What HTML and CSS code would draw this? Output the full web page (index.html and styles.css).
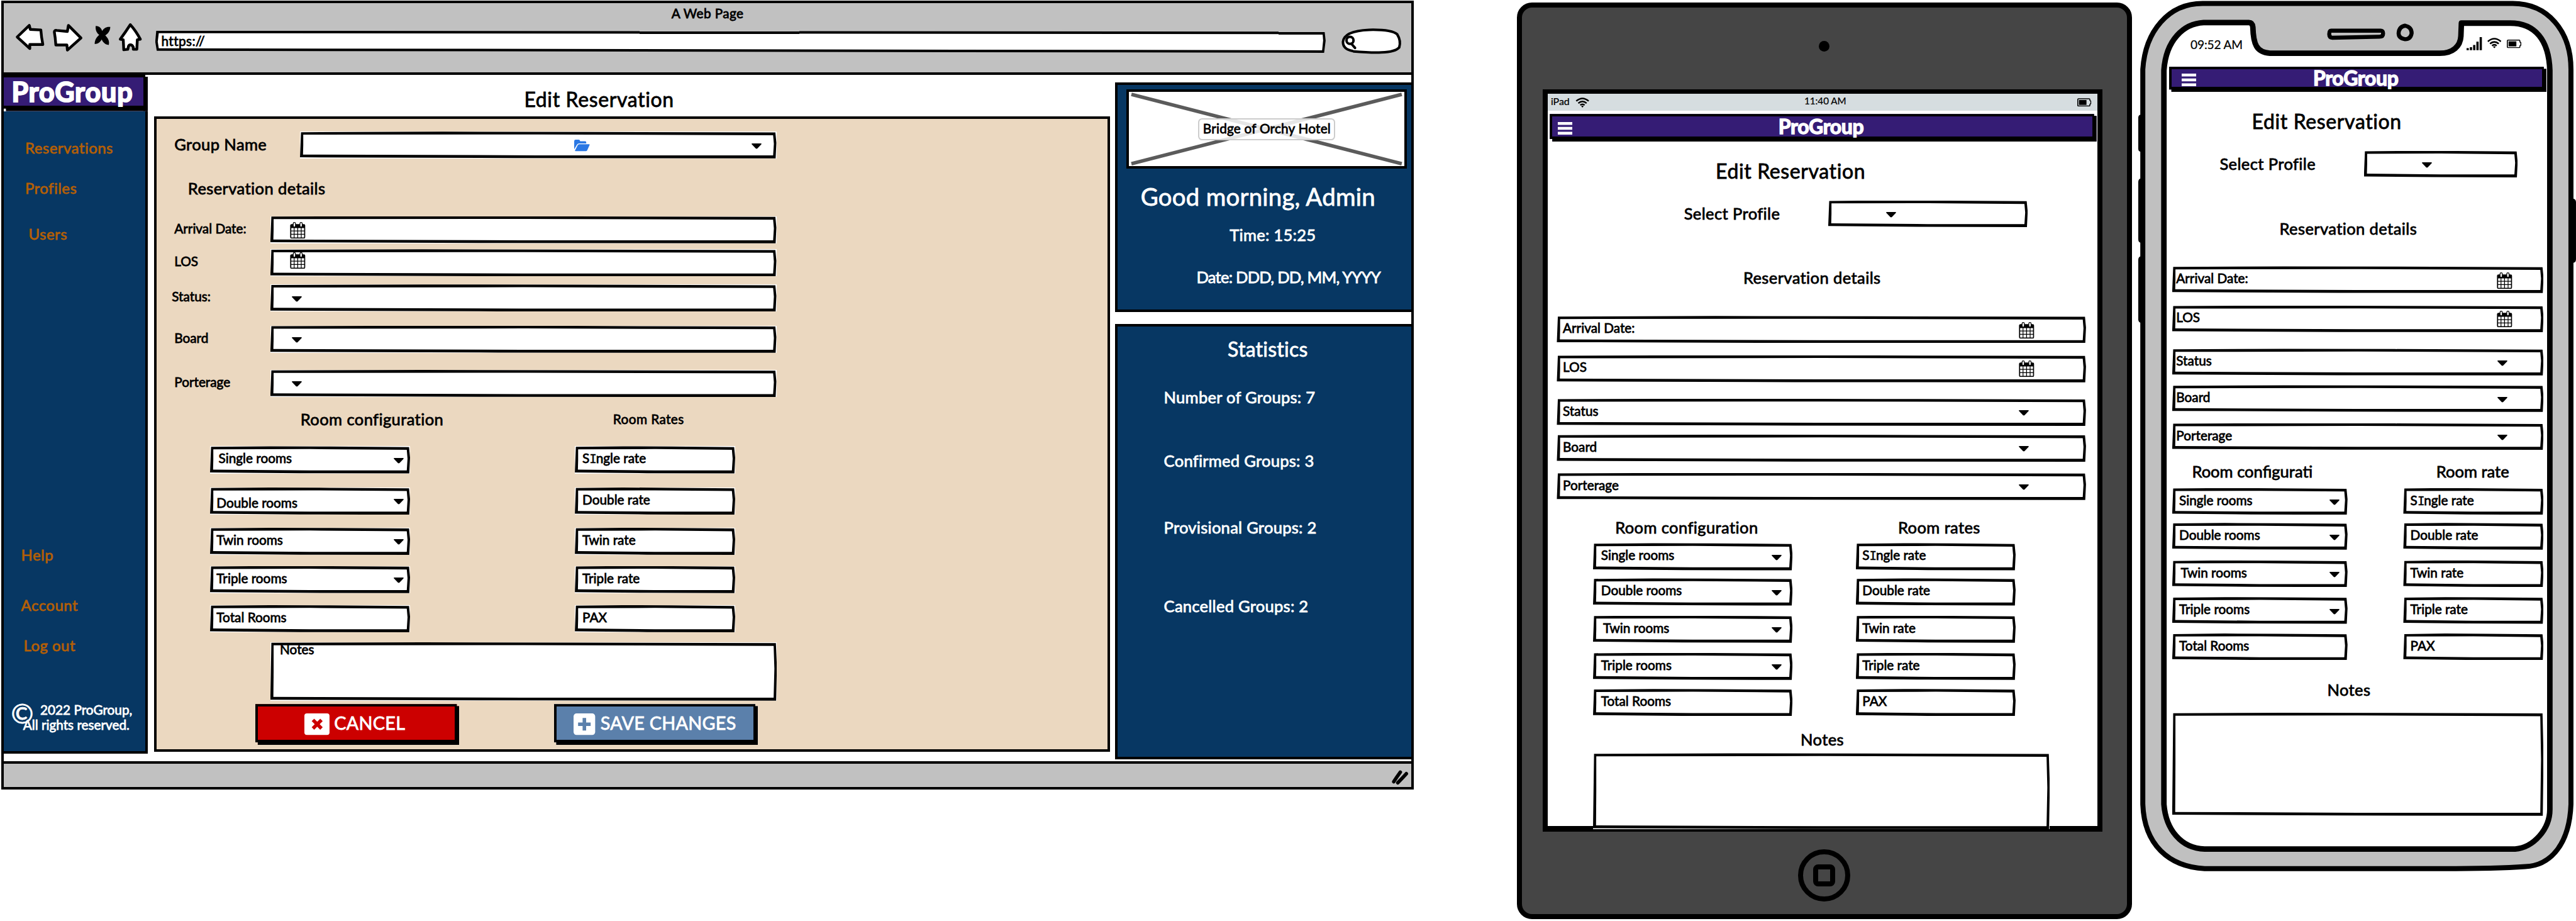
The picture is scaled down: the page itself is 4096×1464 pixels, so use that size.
FILE: index.html
```html
<!DOCTYPE html>
<html lang="en">
<head>
<meta charset="utf-8">
<title>ProGroup – Edit Reservation</title>
<link rel="stylesheet" href="styles.css">
</head>
<body>
<svg class="defs" aria-hidden="true">
  <symbol id="caret" viewBox="0 0 20 11"><path d="M1.2 0H18.8Q20.6.4 19.4 2L11.6 10Q10 11.6 8.4 10L.6 2Q-.6.4 1.2 0Z"/></symbol>
  <symbol id="calendar" viewBox="0 0 30 33">
    <path d="M3 4H27Q30 4 30 7V30Q30 33 27 33H3Q0 33 0 30V7Q0 4 3 4Z"/>
    <path fill="#fff" d="M2.2 12h5v5h-5zM8.700 12h5.500v5H8.700zM15.800 12h5.500v5h-5.500zM22.800 12h5v5h-5zM2.200 18.500h5v5h-5zM8.700 18.500h5.500v5H8.700zM15.800 18.500h5.500v5h-5.500zM22.800 18.500h5v5h-5zM2.200 25h5v5.800h-5zM8.700 25h5.500v5.800H8.700zM15.800 25h5.500v5.800h-5.500zM22.800 25h5v5.800h-5z"/>
    <rect x="6" y=".8" width="4.600" height="9" rx="2.300" fill="#fff" stroke="#000" stroke-width="1.600"/>
    <rect x="19.400" y=".8" width="4.600" height="9" rx="2.300" fill="#fff" stroke="#000" stroke-width="1.600"/>
  </symbol>
  <symbol id="wifi" viewBox="0 0 28 21">
    <g fill="none" stroke="#000" stroke-width="3.200"><path d="M1 7.500Q14-3.800 27 7.500"/><path d="M5.300 12Q14 4.400 22.700 12"/><path d="M9.400 16Q14 12 18.600 16"/></g>
    <path d="M11.300 18Q14 16 16.700 18L14 21Z"/>
  </symbol>
  <symbol id="battery" viewBox="0 0 29 17"><path fill="none" stroke="#000" stroke-width="2" d="M2.500 1H24.500Q26 1 26 2.500V4.500L28 6V11L26 12.500V14.500Q26 16 24.500 16H2.500Q1 16 1 14.500V2.500Q1 1 2.500 1Z"/><path d="M3.500 3.500H19V13.500H3.500Z"/></symbol>
  <symbol id="menu" viewBox="0 0 29 25"><path d="M0 0H29V5.500H0ZM0 9.800H29V15.300H0ZM0 19.500H29V25H0Z"/></symbol>
</svg>

<main class="board">

  <section class="browser">
    <header class="chrome">
      <div class="chrome-title">A Web Page</div>
      <div class="toolbar">
        <svg class="nav-icon back" viewBox="0 0 56 52"><path d="M3 26L27 3 29 11 50 12Q51 26 54 41L28 41 28 49Z"/></svg>
        <svg class="nav-icon forward" viewBox="0 0 58 54"><path d="M3 16Q3 12 8 13L29 15 31 3 56 28 29 52 28 42 6 42Q5 27 3 16Z"/></svg>
        <svg class="nav-icon stop" viewBox="0 0 34 42"><path d="M4 4C12 4 15 9 17 14C20 8 26 5 33 6C33 14 28 20 23 23C28 28 32 34 30 42C22 41 18 36 16 31C12 37 8 40 2 40C2 32 6 26 11 22C6 18 3 12 4 4Z"/></svg>
        <svg class="nav-icon home" viewBox="0 0 48 58"><path d="M24 4Q35 16 44 33L38 34 37 53H30V49Q28 44 24 44Q20 45 20 49L19 53 11 54 10 34 4 33Q15 18 24 4Z"/></svg>
        <div class="address">https://</div>
        <svg class="search" viewBox="0 0 120 52"><path class="pill" d="M22 45Q3 42 3 27Q5 5 55 3Q100 2 111 12Q119 25 115 38Q107 47 80 48Q60 49 24 46"/><circle cx="17" cy="24" r="7"/><path d="M20 31L27 39"/></svg>
      </div>
    </header>

    <div class="page">
      <nav class="sidebar">
        <div class="logo raised">ProGroup</div>
        <div class="links">
          <a class="link-reservations">Reservations</a>
          <a class="link-profiles">Profiles</a>
          <a class="link-users">Users</a>
          <a class="link-help">Help</a>
          <a class="link-account">Account</a>
          <a class="link-logout">Log out</a>
          <div class="copyright"><span class="mark">©</span><p class="owner">2022 ProGroup,</p><p class="rights">All rights reserved.</p></div>
        </div>
      </nav>

      <section class="content">
        <h1 class="title">Edit Reservation</h1>
        <form class="panel">
          <div class="group-row">
            <label class="subhead">Group Name</label>
            <div class="field group-field"><svg class="folder" viewBox="0 0 31 23"><path d="M0 19V3Q0 0 3 0H9Q11 0 12 3H22Q24 3 24 6V7.500H10Q7 7.500 5.500 10Z"/><path d="M1.500 22L7 11Q8 9 10 9H30Q31.500 9 30.500 11L26 21Q25 23 23 23H3Q1 23 1.500 22Z"/></svg><svg class="caret"><use href="#caret"/></svg></div>
          </div>
          <h2 class="subhead details">Reservation details</h2>
          <div class="fields">
            <label>Arrival Date:</label><div class="field"><svg class="calendar"><use href="#calendar"/></svg></div>
            <label>LOS</label><div class="field"><svg class="calendar high"><use href="#calendar"/></svg></div>
            <label class="status">Status:</label><div class="field"><svg class="caret"><use href="#caret"/></svg></div>
            <label>Board</label><div class="field"><svg class="caret"><use href="#caret"/></svg></div>
            <label>Porterage</label><div class="field"><svg class="caret"><use href="#caret"/></svg></div>
          </div>
          <div class="room-heads"><h3 class="subhead">Room configuration</h3><h3 class="small">Room Rates</h3></div>
          <div class="rooms">
            <div class="field inset">Single rooms<svg class="caret"><use href="#caret"/></svg></div><div class="field rate"><span>S<i class="slab">I</i>ngle rate</span></div>
            <div class="field low">Double rooms<svg class="caret"><use href="#caret"/></svg></div><div class="field rate">Double rate</div>
            <div class="field">Twin rooms<svg class="caret"><use href="#caret"/></svg></div><div class="field rate">Twin rate</div>
            <div class="field">Triple rooms<svg class="caret"><use href="#caret"/></svg></div><div class="field rate">Triple rate</div>
            <div class="field">Total Rooms</div><div class="field rate">PAX</div>
          </div>
          <div class="field notes">Notes</div>
          <div class="actions">
            <div class="button cancel raised"><svg viewBox="0 0 50 43"><rect width="50" height="43" rx="5"/><path d="M17 13L34 30M34 13L17 30"/></svg>CANCEL</div>
            <div class="button save raised"><svg viewBox="0 0 43 43"><rect width="43" height="43" rx="6"/><path d="M21.500 9V34M9 21.500H34"/></svg>SAVE CHANGES</div>
          </div>
        </form>
      </section>

      <aside class="aside">
        <section class="card welcome">
          <div class="picture">
            <svg viewBox="0 0 558 158" preserveAspectRatio="none"><path d="M10 10L548 148M548 10L10 148"/></svg>
            <span class="picture-label">Bridge of Orchy Hotel</span>
          </div>
          <p class="greeting">Good morning, Admin</p>
          <p class="time">Time: 15:25</p>
          <p class="date">Date: DDD, DD, MM, YYYY</p>
        </section>
        <section class="card stats">
          <h2 class="stats-title">Statistics</h2>
          <p class="number">Number of Groups: 7</p>
          <p class="confirmed">Confirmed Groups: 3</p>
          <p class="provisional">Provisional Groups: 2</p>
          <p class="cancelled">Cancelled Groups: 2</p>
        </section>
      </aside>
    </div>
    <footer class="statusbar"><svg viewBox="0 0 34 28"><path d="M4 22Q9 14 17 3M12 24Q20 16 29 6"/></svg></footer>
  </section>

  <section class="tablet">
    <div class="lens"></div>
    <div class="screen">
      <div class="device-status"><span>iPad</span><svg class="wifi"><use href="#wifi"/></svg><span class="clock">11:40 AM</span><svg class="battery"><use href="#battery"/></svg></div>
      <header class="appbar raised"><svg class="menu"><use href="#menu"/></svg><span>ProGroup</span></header>
      <h1 class="title">Edit Reservation</h1>
      <div class="select-row"><label class="subhead">Select Profile</label><div class="field"><svg class="caret"><use href="#caret"/></svg></div></div>
      <h2 class="subhead details">Reservation details</h2>
      <div class="fields">
        <div class="field">Arrival Date:<svg class="calendar"><use href="#calendar"/></svg></div>
        <div class="field los">LOS<svg class="calendar"><use href="#calendar"/></svg></div>
        <div class="field">Status<svg class="caret"><use href="#caret"/></svg></div>
        <div class="field">Board<svg class="caret"><use href="#caret"/></svg></div>
        <div class="field">Porterage<svg class="caret"><use href="#caret"/></svg></div>
      </div>
      <div class="room-heads"><h3 class="subhead">Room configuration</h3><h3 class="subhead">Room rates</h3></div>
      <div class="rooms">
        <div class="field">Single rooms<svg class="caret"><use href="#caret"/></svg></div><div class="field rate"><span>S<i class="slab">I</i>ngle rate</span></div>
        <div class="field">Double rooms<svg class="caret"><use href="#caret"/></svg></div><div class="field rate">Double rate</div>
        <div class="field inset">Twin rooms<svg class="caret"><use href="#caret"/></svg></div><div class="field rate">Twin rate</div>
        <div class="field">Triple rooms<svg class="caret"><use href="#caret"/></svg></div><div class="field rate">Triple rate</div>
        <div class="field">Total Rooms</div><div class="field rate">PAX</div>
      </div>
      <h2 class="subhead notes-head">Notes</h2>
      <div class="field notes"></div>
    </div>
    <div class="home-button"><i></i></div>
  </section>

  <section class="phone">
    <svg class="phone-body" viewBox="0 0 871 1736">
      <path d="M6 228Q0 228 0 234V296Q0 302 6 302ZM6 355Q0 355 0 362V476Q0 483 6 483ZM6 510Q0 510 0 517V635Q0 642 6 642ZM864 395Q871 395 871 402V516Q871 523 864 523Z"/>
      <path fill="#c0c0c0" stroke="#000" stroke-width="10" d="M128 7H745C815 7 861 62 861 138V1600C858 1680 820 1722 770 1724C700 1729 640 1728 560 1728H132C60 1724 12 1680 9 1600V138C14 62 60 7 128 7Z"/>
      <path fill="#fff" stroke="#000" stroke-width="11" stroke-linejoin="round" d="M130 45H220Q227 45 228 54C229 88 235 104 262 106H600C626 106 641 92 642 72L643 46H740C790 46 817 80 819 140V1610C819 1650 786 1686 750 1689H132C85 1688 55 1650 51 1600V140C55 80 90 47 130 45Z"/>
      <path fill="none" stroke="#000" stroke-width="8" d="M384 61H482Q488 61 487 68Q487 73 480 73L386 75Q380 75 380 68Q380 61 384 61ZM531 51Q544 54 544 66Q542 78 531 78Q518 76 518 66Q519 53 531 51Z"/>
    </svg>
    <div class="device-status"><span>09:52 AM</span><svg class="signal" viewBox="0 0 31 26"><path d="M0 22H4.500V26H0ZM6.500 20H11V26H6.500ZM13 15.500H17.500V26H13ZM19.500 9H24V26H19.500ZM26 0H30.500V26H26Z"/></svg><svg class="wifi"><use href="#wifi"/></svg><svg class="battery"><use href="#battery"/></svg></div>
    <header class="appbar raised"><svg class="menu"><use href="#menu"/></svg><span>ProGroup</span></header>
    <h1 class="title">Edit Reservation</h1>
    <div class="select-row"><label class="subhead">Select Profile</label><div class="field"><svg class="caret"><use href="#caret"/></svg></div></div>
    <h2 class="subhead details">Reservation details</h2>
    <div class="fields">
      <div class="field">Arrival Date:<svg class="calendar"><use href="#calendar"/></svg></div>
      <div class="field los">LOS<svg class="calendar"><use href="#calendar"/></svg></div>
      <div class="field">Status<svg class="caret"><use href="#caret"/></svg></div>
      <div class="field">Board<svg class="caret"><use href="#caret"/></svg></div>
      <div class="field">Porterage<svg class="caret"><use href="#caret"/></svg></div>
    </div>
    <div class="room-heads"><h3 class="subhead">Room configurati</h3><h3 class="subhead">Room rate</h3></div>
    <div class="rooms">
      <div class="field">Single rooms<svg class="caret"><use href="#caret"/></svg></div><div class="field rate"><span>S<i class="slab">I</i>ngle rate</span></div>
      <div class="field">Double rooms<svg class="caret"><use href="#caret"/></svg></div><div class="field rate">Double rate</div>
      <div class="field inset">Twin rooms<svg class="caret"><use href="#caret"/></svg></div><div class="field rate">Twin rate</div>
      <div class="field">Triple rooms<svg class="caret"><use href="#caret"/></svg></div><div class="field rate">Triple rate</div>
      <div class="field">Total Rooms</div><div class="field rate">PAX</div>
    </div>
    <h2 class="subhead notes-head">Notes</h2>
    <div class="field notes"></div>
  </section>

</main>
</body>
</html>
```

FILE: styles.css
```css
* { box-sizing: border-box; margin: 0; padding: 0; }

html, body { height: 100%; background: #fff; overflow: hidden; }

.defs { position: absolute; width: 0; height: 0; }

.board {
  zoom: 0.79906;
  display: flex;
  align-items: flex-start;
  width: 5126px;
  height: 1832px;
  font: 400 26px/50px Lato, "Open Sans", sans-serif;
  letter-spacing: 0;
  white-space: nowrap;
  color: #000;
  -webkit-text-stroke: 1px currentColor;
}

svg { display: block; flex: none; overflow: visible; }

.title { font-size: 40px; font-weight: 400; line-height: 40px; letter-spacing: 0.02em; }
.subhead { font-size: 32px; font-weight: 400; line-height: 40px; letter-spacing: 0.015em; }
.small { font-size: 26px; font-weight: 400; line-height: 40px; letter-spacing: 0.02em; }

/* Capital I with bars */
.slab { font: 400 24px/1 "DejaVu Sans Mono", monospace; letter-spacing: -1.500px; -webkit-text-stroke-width: 0.5px; }

/* Hand-drawn box: black wobbly outline with a white face */
.field {
  position: relative;
  z-index: 0;
  display: flex;
  align-items: flex-start;
  height: 54px;
  background: #fff;
}
.field::before, .field::after, .address::before, .address::after {
  content: "";
  position: absolute;
  inset: 0;
  z-index: -1;
}
.field::before {
  background: #000;
  clip-path: polygon(2px 1px, 30% 0, 60% .5px, calc(100% - 2px) 1.500px, 100% 42%, calc(100% - 1.500px) 100%, 45% calc(100% - .5px), 0 calc(100% - 2px), 1px 50%);
}
.field::after {
  background: #fff;
  clip-path: polygon(6.500px 6px, 50% 5.500px, calc(100% - 6.500px) 7px, calc(100% - 5px) 45%, calc(100% - 6.500px) calc(100% - 6px), 50% calc(100% - 6px), 6px calc(100% - 7.500px), 6.500px 50%);
}

.caret { width: 20px; height: 11px; margin: 23px 0 0 auto; }
.calendar { width: 31px; height: 33px; margin: 12px 0 0 auto; }

/* Block with an offset black drop edge */
.raised {
  border: solid #000;
  border-width: 5.1px 9px 10.1px 5.1px;
  clip-path: polygon(0 0, calc(100% - 5px) 0, calc(100% - 5px) 4px, 100% 4px, 100% 100%, 5px 100%, 5px calc(100% - 5px), 0 calc(100% - 5px));
}

/* ---------- Browser window ---------- */
.browser {
  display: flex;
  flex-direction: column;
  flex: none;
  width: 2811px;
  height: 1569px;
  margin: 1px 0 0 2px;
  border: 5.1px solid #000;
  background: #fff;
}
.chrome { height: 143px; background: #c1c1c1; border-bottom: 5.1px solid #000; }
.chrome-title { height: 39px; padding: 2px 0 0 1px; line-height: 40px; letter-spacing: 0.02em; text-align: center; }
.toolbar { display: flex; align-items: flex-start; height: 66px; }
.nav-icon { fill: #fff; stroke: #000; stroke-width: 5.500; stroke-linejoin: round; }
.back { width: 56px; height: 52px; margin: 2px 0 0 24px; }
.forward { width: 58px; height: 54px; margin: 2px 0 0 18px; }
.stop { width: 34px; height: 42px; margin: 3px 0 0 23px; fill: #000; stroke: none; }
.home { width: 48px; height: 58px; margin: 0 0 0 15px; }
.address {
  position: relative;
  z-index: 0;
  width: 2329px;
  height: 44px;
  margin: 16px 0 0 26px;
  padding-left: 12px;
  line-height: 42px;
  letter-spacing: 0.02em;
}
.address::before { background: #000; clip-path: polygon(2px 0, calc(100% - 2px) 2px, 100% 45%, calc(100% - 3px) 100%, 3px calc(100% - 4px), 0 50%); }
.address::after { background: #fff; clip-path: polygon(7px 5px, calc(100% - 6px) 7px, calc(100% - 5px) 45%, calc(100% - 7px) calc(100% - 5px), 7px calc(100% - 9px), 5px 50%); }
.search { width: 120px; height: 52px; margin: 11px 0 0 31px; fill: none; stroke: #000; stroke-width: 5; stroke-linecap: round; }
.search .pill { fill: #fff; }

.page { display: flex; align-items: flex-start; height: 1365px; }

.sidebar { flex: none; width: 287px; height: 1350px; display: flex; flex-direction: column; }
.logo {
  height: 72px;
  border-width: 5.1px 9px 11.3px 0;
  background: #351c75;
  color: #fff;
  padding-left: 16px;
  font-size: 54px;
  font-weight: 700;
  line-height: 56px;
  letter-spacing: 0.02em;
  -webkit-text-stroke-width: 2.500px;
}
.links {
  flex: 1;
  display: flex;
  flex-direction: column;
  border: solid #000;
  border-width: 0 5.1px 5.1px 0;
  background: #073763;
  color: #b45f06;
  font-size: 30px;
  line-height: 40px;
  letter-spacing: 0.02em;
}
.link-reservations { margin: 53px 0 0 43px; }
.link-profiles { margin: 40px 0 0 43px; }
.link-users { margin: 52px 0 0 50px; }
.link-help { margin: 598px 0 0 35px; }
.link-account { margin: 60px 0 0 35px; }
.link-logout { margin: 40px 0 0 40px; }
.copyright { position: relative; margin-top: 94px; color: #fff; font-size: 26px; line-height: 30px; letter-spacing: 0; }
.mark { position: absolute; left: 15px; top: 0; font-size: 54px; line-height: 41px; }
.owner { padding-left: 73px; }
.rights { padding-left: 39px; }

.content { flex: none; width: 1902px; margin-left: 13px; }
.content .title { margin: 29px 0 14px 736px; }
.panel {
  height: 1264px;
  border: 5.1px solid #000;
  background: #ebd8c0;
}
.group-row { display: flex; margin: 25px 0 0 35px; }
.group-row .subhead { width: 250px; line-height: 51px; }
.group-field { width: 948px; height: 53px; }
.group-field .caret { margin-right: 30px; }
.folder { width: 31px; height: 23px; margin: 16px 0 0 546px; fill: #2b78e4; }
.panel .details { margin: 40px 0 35px 62px; }
.panel .fields {
  display: grid;
  grid-template-columns: 191px 1007px;
  grid-template-rows: 66px 70px 82px 88px 54px;
  margin-left: 35px;
}
.panel .fields .status { margin-left: -5px; }
.panel .fields .caret { margin-left: 43px; }
.panel .fields .calendar { margin-left: 39px; }
.panel .fields .high { margin-top: 6px; }
.panel .room-heads { display: flex; margin: 25px 0 33px 286px; }
.panel .room-heads .subhead { width: 622px; }
.panel .rooms {
  display: grid;
  grid-template-columns: 398px 319px;
  grid-template-rows: 82px 80px 76px 78px 54px;
  column-gap: 328px;
  margin-left: 106px;
}
.panel .rooms .field { padding: 0 13px; }
.panel .rooms .inset { padding-left: 17px; }
.panel .rooms .rate { padding-left: 15px; }
.panel .rooms .low { line-height: 62px; }
.panel .notes { width: 1008px; height: 116px; margin: 20px 0 0 226px; padding-left: 19px; line-height: 30px; }
.actions { display: flex; gap: 188px; margin: 7px 0 0 196px; }
.button {
  display: flex;
  align-items: center;
  width: 406px;
  height: 81px;
  color: #fff;
  font-size: 36px;
  line-height: 66px;
  letter-spacing: 0.01em;
}
.button svg { height: 43px; margin-top: 4px; fill: #fff; stroke-width: 7; }
.cancel { background: #c00; padding-left: 93px; gap: 9px; }
.cancel svg { width: 50px; stroke: none; }
.cancel svg path { stroke: #c00; }
.save { background: #5b80ab; padding-left: 34px; gap: 11px; }
.save svg { width: 43px; stroke: none; }
.save svg path { stroke: #5b80ab; }

.aside { flex: none; width: 594px; margin: 15px 0 0 10px; }
.card { border: 5.1px solid #000; background: #073763; color: #fff; font-size: 32px; line-height: 40px; letter-spacing: 0.01em; }
.welcome { height: 457px; }
.picture {
  position: relative;
  width: 558px;
  height: 158px;
  margin: 9px 0 0 18px;
  border: 5.1px solid #000;
  background: #fff;
  display: flex;
  align-items: center;
  justify-content: center;
}
.picture svg { position: absolute; left: -5px; top: -5px; width: 558px; height: 158px; stroke: #5b5b5b; stroke-width: 7; }
.picture-label {
  position: relative;
  width: 273px;
  height: 43px;
  border: 2.600px solid #ccc;
  border-radius: 8px;
  background: rgba(255, 255, 255, .85);
  color: #000;
  font-size: 26px;
  line-height: 36px;
  letter-spacing: 0.01em;
  text-align: center;
}
.greeting { margin: 26px 0 0 46px; font-size: 48px; line-height: 60px; }
.time { margin: 26px 0 0 223px; }
.date { margin: 44px 0 0 157px; letter-spacing: -0.03em; }
.stats { height: 867px; margin-top: 23px; }
.stats-title { margin: 26px 0 0 219px; font-size: 40px; font-weight: 400; }
.number { margin: 56px 0 0 92px; }
.confirmed { margin: 86px 0 0 92px; }
.provisional { margin: 93px 0 0 92px; }
.cancelled { margin: 116px 0 0 92px; }

.statusbar { flex: 1; display: flex; justify-content: flex-end; border-top: 5.1px solid #000; background: #c1c1c1; }
.statusbar svg { width: 34px; height: 28px; margin: 14px 5px 0 0; fill: none; stroke: #000; stroke-width: 7; stroke-linecap: round; }

/* ---------- Parts shared by the two devices ---------- */
.device-status { display: flex; }
.appbar {
  display: flex;
  background: #351c75;
  color: #fff;
  font-size: 40px;
  font-weight: 700;
  line-height: 40px;
  letter-spacing: -0.01em;
  -webkit-text-stroke-width: 1.800px;
}
.menu { width: 29px; height: 25px; fill: #fff; }
.select-row { display: flex; }
.select-row .subhead { width: 287px; line-height: 51px; }
.select-row .field { height: 53px; }
.select-row .caret { margin-left: 115px; }
.fields, .rooms { display: grid; }
.room-heads { display: flex; }
.room-heads h3 { flex: none; }

/* ---------- Tablet ---------- */
.tablet {
  flex: none;
  display: flex;
  flex-direction: column;
  width: 1224px;
  height: 1823px;
  margin: 5px 0 0 205px;
  border: 10.1px solid #000;
  border-radius: 30px;
  background: #454545;
}
.lens { width: 22px; height: 22px; margin: 66px 0 0 591px; border-radius: 50%; background: #000; }
.screen {
  flex: none;
  width: 1114px;
  height: 1476px;
  margin: 75px 0 0 42px;
  border: solid #000;
  border-width: 9px 10.1px 11.3px;
  background: #fff;
}
.tablet .device-status { height: 33px; padding-left: 6px; background: #d6dde0; font-size: 20px; line-height: 30px; -webkit-text-stroke-width: 0.3px; }
.tablet .wifi { width: 28px; height: 20px; margin: 7px 0 0 11px; }
.tablet .clock { margin-left: 428px; font-size: 19px; }
.tablet .battery { width: 28px; height: 17px; margin: 9px 13px 0 auto; }
.tablet .appbar { width: 1088px; height: 55px; margin: 7px 0 0 4px; }
.tablet .menu { margin: 11px 0 0 11px; }
.tablet .appbar span { margin-left: 410px; }
.tablet .title { margin: 39px 0 38px 334px; }
.tablet .select-row { margin-left: 271px; }
.tablet .select-row .field { width: 397px; }
.tablet .details { margin: 82px 0 55px 389px; }
.tablet .fields { grid-template-columns: 1053px; grid-template-rows: 78px 86.500px 71.500px 76px 54px; margin-left: 18px; }
.tablet .fields .field { padding: 0 114px 0 12px; }
.tablet .fields .calendar { margin-right: -11px; }
.tablet .room-heads { margin: 35px 0 11px 134px; }
.tablet .room-heads .subhead { width: 563px; }
.tablet .rooms { grid-template-columns: 397px 318px; grid-template-rows: 70px 74px 74px 72px 54px; column-gap: 126px; margin-left: 90px; }
.tablet .rooms .field { padding: 0 21px 0 16px; }
.tablet .rooms .inset { padding-left: 20px; }
.tablet .rooms .rate { padding-left: 13px; }
.tablet .notes-head { margin: 27px 0 7px 503px; }
.tablet .notes { width: 909px; height: 151px; margin-left: 90px; }
.los { line-height: 47px; }
.los .calendar { margin-top: 10px; }
.home-button {
  display: flex;
  align-items: center;
  justify-content: center;
  width: 104px;
  height: 104px;
  margin: 35px 0 0 550px;
  border: 10.1px solid #000;
  border-radius: 50%;
}
.home-button i { width: 43px; height: 44px; border: 10.1px solid #000; border-radius: 10px; }

/* ---------- Phone ---------- */
.phone { position: relative; z-index: 0; flex: none; width: 871px; height: 1736px; margin-left: 13px; padding-top: 69px; }
.phone-body { position: absolute; left: 0; top: 0; z-index: -1; width: 871px; height: 1736px; }
.phone .device-status { height: 40px; padding-left: 104px; font-size: 24px; line-height: 40px; letter-spacing: -0.01em; -webkit-text-stroke-width: 0.3px; }
.signal { width: 31px; height: 26px; margin: 5px 11px 0 auto; }
.phone .wifi { width: 28px; height: 21px; margin: 6px 10px 0 0; }
.phone .battery { width: 29px; height: 17px; margin: 10px 109px 0 0; }
.phone .appbar { width: 751px; height: 50px; margin: 24px 0 0 61px; line-height: 36px; }
.phone .menu { margin: 8px 0 0 21px; }
.phone .appbar span { margin-left: 232px; }
.phone .title { margin: 39px 0 38px 226px; }
.phone .select-row { margin-left: 162px; }
.phone .select-row .field { width: 306px; }
.phone .details { margin: 83px 0 54px 281px; }
.phone .fields { grid-template-columns: 739px; grid-template-rows: 78px 86px 72.500px 75.500px 53px; margin-left: 67.500px; }
.phone .field { height: 53px; }
.phone .fields .field { padding: 0 72px 0 8px; }
.phone .fields .calendar { margin-right: -10px; }
.phone .room-heads { margin: 24px 0 12px 107px; letter-spacing: 0; }
.phone .room-heads .subhead { width: 486px; letter-spacing: 0; }
.phone .rooms { grid-template-columns: 349px 279px; grid-template-rows: 69.500px 74.500px 73px 72.500px 53.500px; column-gap: 111px; margin-left: 67.500px; }
.phone .rooms .field { padding: 0 16px 0 14px; }
.phone .rooms .inset { padding-left: 17px; }
.phone .notes-head { margin: 39px 0 25px 376px; }
.phone .notes { width: 739px; height: 205px; margin-left: 67.500px; }
```
